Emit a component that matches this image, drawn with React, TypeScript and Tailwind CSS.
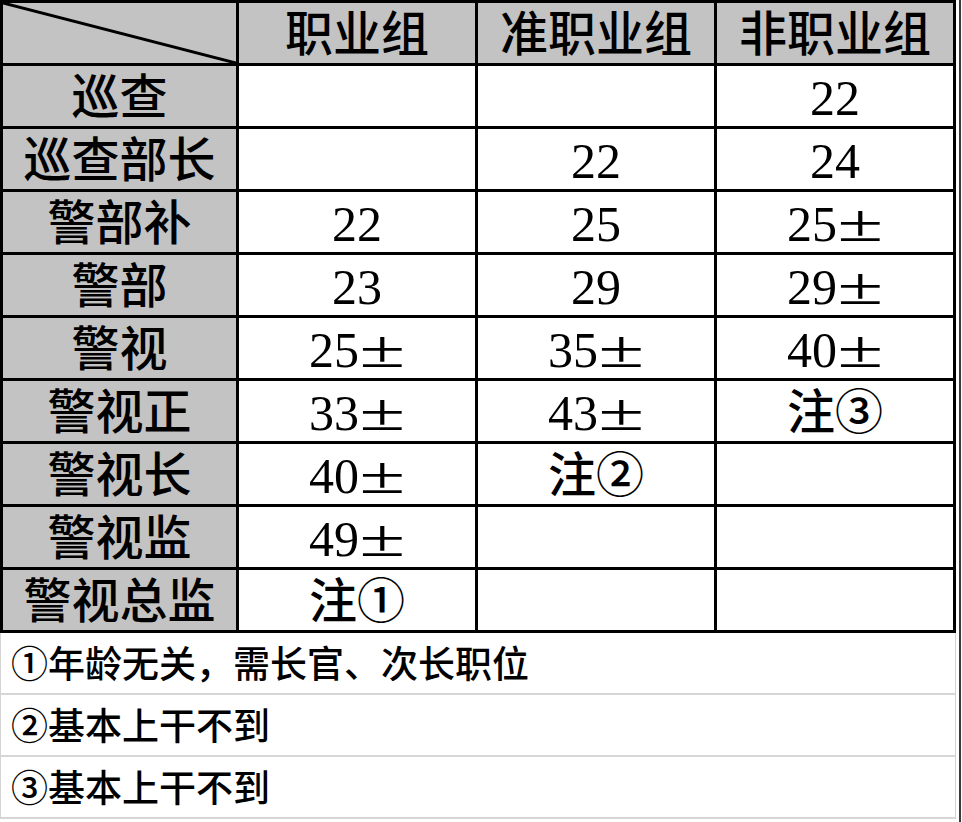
const header = ["职业组", "准职业组", "非职业组"]

const rows = [
  { rank: "巡查", values: ["", "", "22"] },
  { rank: "巡查部长", values: ["", "22", "24"] },
  { rank: "警部补", values: ["22", "25", "25±"] },
  { rank: "警部", values: ["23", "29", "29±"] },
  { rank: "警视", values: ["25±", "35±", "40±"] },
  { rank: "警视正", values: ["33±", "43±", "注③"] },
  { rank: "警视长", values: ["40±", "注②", ""] },
  { rank: "警视监", values: ["49±", "", ""] },
  { rank: "警视总监", values: ["注①", "", ""] },
]

const notes = ["①年龄无关，需长官、次长职位", "②基本上干不到", "③基本上干不到"]

const cell = "h-[60px] flex items-center justify-center"

function Value({ v }: { v: string }) {
  if (v.endsWith("±")) {
    return (
      <span className="flex items-center">
        <span className="text-[50px]">{v.slice(0, -1)}</span>
        <span className="w-[46px] flex justify-center">
          <span className="inline-block text-[52px] font-normal scale-x-[1.6]">±</span>
        </span>
      </span>
    )
  }
  if (/^\d+$/.test(v)) return <span className="text-[50px]">{v}</span>
  return <span>{v}</span>
}

export default function App() {
  return (
    <div className="w-[961px] min-h-[822px] bg-white border-r-2 border-r-[#3a3a3a] font-['Liberation_Serif','Noto_Sans_CJK_SC',serif] text-black">
      {/* main table: black grid lines come from the gap */}
      <div className="w-[956px] grid grid-cols-[233px_236px_236px_236px] gap-[3px] bg-black border-[3px] border-black text-[48px] font-medium leading-none">
        <div className={`${cell} relative bg-[#c3c3c3]`}>
          <svg className="absolute inset-0 w-full h-full" viewBox="0 0 233 60" preserveAspectRatio="none">
            <line x1="0" y1="0" x2="233" y2="60" stroke="black" strokeWidth="3" />
          </svg>
        </div>
        {header.map((h) => (
          <div key={h} className={`${cell} bg-[#c3c3c3] pt-1`}>
            {h}
          </div>
        ))}

        {rows.map((row) => (
          <>
            <div key={row.rank} className={`${cell} bg-[#c3c3c3] pt-1`}>
              {row.rank}
            </div>
            {row.values.map((v, i) => (
              <div key={row.rank + i} className={`${cell} bg-white pt-1`}>
                <Value v={v} />
              </div>
            ))}
          </>
        ))}
      </div>

      {/* notes below the table */}
      <div className="w-[956px] border-l border-r border-[#d4d4d4] font-['Noto_Sans_CJK_SC',sans-serif] text-[37px] font-medium">
        {notes.map((n) => (
          <div key={n} className="h-[62px] flex items-center pl-[10px] border-b-2 border-[#d6d6d6]">
            {n}
          </div>
        ))}
      </div>
    </div>
  )
}
